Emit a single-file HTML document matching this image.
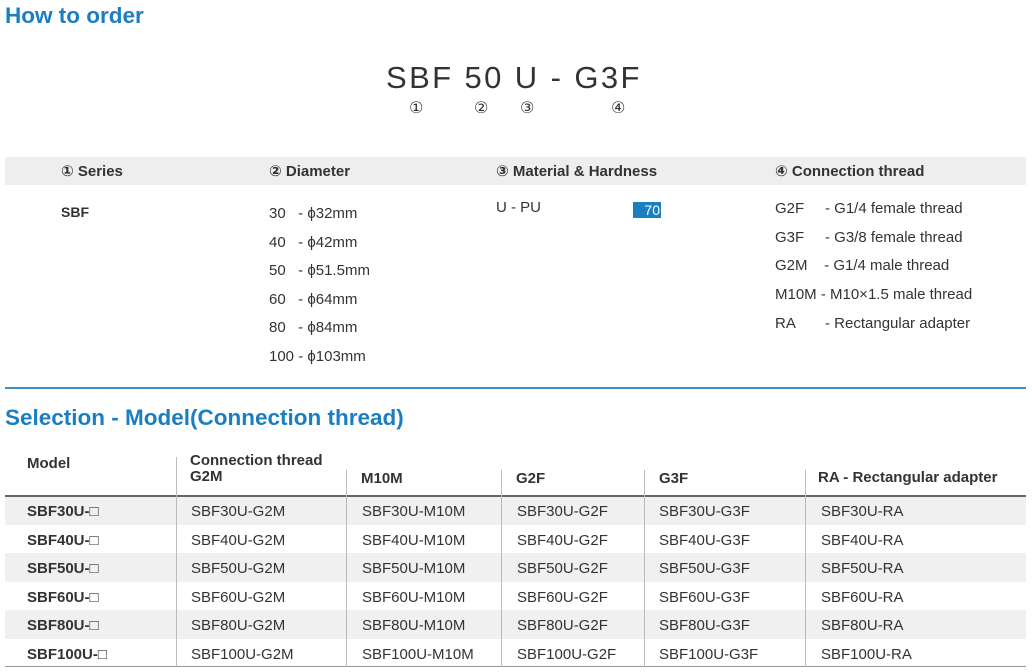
<!DOCTYPE html>
<html><head><meta charset="utf-8"><style>
*{margin:0;padding:0;box-sizing:border-box}
body{width:1032px;height:672px;background:#fff;font-family:"Liberation Sans","DejaVu Sans",sans-serif;color:#333;position:relative;overflow:hidden}
.a{position:absolute;white-space:nowrap}
.t{color:#1a7fc1;font-weight:bold;font-size:22.5px}
.b{font-weight:bold}
.f15{font-size:15px}
.f14{font-size:15px}
.row{position:absolute;left:5px;width:1021px;height:28.5px}
.g{background:#f0f0f0}
.vl{position:absolute;width:1px;background:#bbb}
</style></head><body>
<div class="a t" style="left:5px;top:3px">How to order</div>
<div class="a" style="left:386px;top:60px;font-size:31px;letter-spacing:2.4px;color:#333">SBF&nbsp;50&nbsp;U&nbsp;-&nbsp;G3F</div>
<div class="a" style="left:409px;top:98px;font-size:16px">①</div>
<div class="a" style="left:474px;top:98px;font-size:16px">②</div>
<div class="a" style="left:520px;top:98px;font-size:16px">③</div>
<div class="a" style="left:611px;top:98px;font-size:16px">④</div>

<div class="a" style="left:5px;top:157px;width:1021px;height:28px;background:#eeeeee"></div>
<div class="a b f15" style="left:61px;top:162px">① Series</div>
<div class="a b f15" style="left:269px;top:162px">② Diameter</div>
<div class="a b f15" style="left:496px;top:162px">③ Material &amp; Hardness</div>
<div class="a b f15" style="left:775px;top:162px">④ Connection thread</div>

<div class="a b" style="left:61px;top:204px;font-size:14px">SBF</div>
<div class="a f15" style="left:269px;top:200px;line-height:28.5px">30&nbsp;&nbsp;&nbsp;- ϕ32mm<br>40&nbsp;&nbsp;&nbsp;- ϕ42mm<br>50&nbsp;&nbsp;&nbsp;- ϕ51.5mm<br>60&nbsp;&nbsp;&nbsp;- ϕ64mm<br>80&nbsp;&nbsp;&nbsp;- ϕ84mm<br>100 - ϕ103mm</div>
<div class="a f15" style="left:496px;top:199px">U - PU</div>
<div class="a" style="left:633px;top:202px;width:28px;height:16px;background:#1a7fc1;color:#fff;text-align:right;padding-right:1px;line-height:16px;font-size:14px">70</div>
<div class="a f15" style="left:775px;top:195px;line-height:28.7px">G2F&nbsp;&nbsp;&nbsp;&nbsp;&nbsp;- G1/4 female thread<br>G3F&nbsp;&nbsp;&nbsp;&nbsp;&nbsp;- G3/8 female thread<br>G2M&nbsp;&nbsp;&nbsp;&nbsp;- G1/4 male thread<br>M10M - M10×1.5 male thread<br>RA&nbsp;&nbsp;&nbsp;&nbsp;&nbsp;&nbsp;&nbsp;- Rectangular adapter</div>

<div class="a" style="left:5px;top:387px;width:1021px;height:2px;background:#3a8fc8"></div>
<div class="a t" style="left:5px;top:405px">Selection - Model(Connection thread)</div>

<div class="a b f15" style="left:27px;top:455px">Model</div>
<div class="a b f15" style="left:190px;top:453px;line-height:16px">Connection thread<br>G2M</div>
<div class="a b f15" style="left:361px;top:470px">M10M</div>
<div class="a b f15" style="left:516px;top:470px">G2F</div>
<div class="a b f15" style="left:659px;top:470px">G3F</div>
<div class="a b f15" style="left:818px;top:469px">RA - Rectangular adapter</div>

<div class="row g" style="top:496px"></div>
<div class="row g" style="top:553px"></div>
<div class="row g" style="top:610px"></div>
<div class="a" style="left:5px;top:495px;width:1021px;height:2px;background:#666"></div>
<div class="a" style="left:5px;top:666px;width:1021px;height:1px;background:#999"></div>
<div class="vl" style="left:176px;top:457px;height:210px"></div>
<div class="vl" style="left:346px;top:470px;height:197px"></div>
<div class="vl" style="left:501px;top:470px;height:197px"></div>
<div class="vl" style="left:644px;top:470px;height:197px"></div>
<div class="vl" style="left:805px;top:470px;height:197px"></div>

<div class="a f14" style="left:27px;top:498px;line-height:28.5px;font-weight:bold">SBF30U-□<br>SBF40U-□<br>SBF50U-□<br>SBF60U-□<br>SBF80U-□<br>SBF100U-□</div>
<div class="a f14" style="left:191px;top:498px;line-height:28.5px">SBF30U-G2M<br>SBF40U-G2M<br>SBF50U-G2M<br>SBF60U-G2M<br>SBF80U-G2M<br>SBF100U-G2M</div>
<div class="a f14" style="left:362px;top:498px;line-height:28.5px">SBF30U-M10M<br>SBF40U-M10M<br>SBF50U-M10M<br>SBF60U-M10M<br>SBF80U-M10M<br>SBF100U-M10M</div>
<div class="a f14" style="left:517px;top:498px;line-height:28.5px">SBF30U-G2F<br>SBF40U-G2F<br>SBF50U-G2F<br>SBF60U-G2F<br>SBF80U-G2F<br>SBF100U-G2F</div>
<div class="a f14" style="left:659px;top:498px;line-height:28.5px">SBF30U-G3F<br>SBF40U-G3F<br>SBF50U-G3F<br>SBF60U-G3F<br>SBF80U-G3F<br>SBF100U-G3F</div>
<div class="a f14" style="left:821px;top:498px;line-height:28.5px">SBF30U-RA<br>SBF40U-RA<br>SBF50U-RA<br>SBF60U-RA<br>SBF80U-RA<br>SBF100U-RA</div>
</body></html>
